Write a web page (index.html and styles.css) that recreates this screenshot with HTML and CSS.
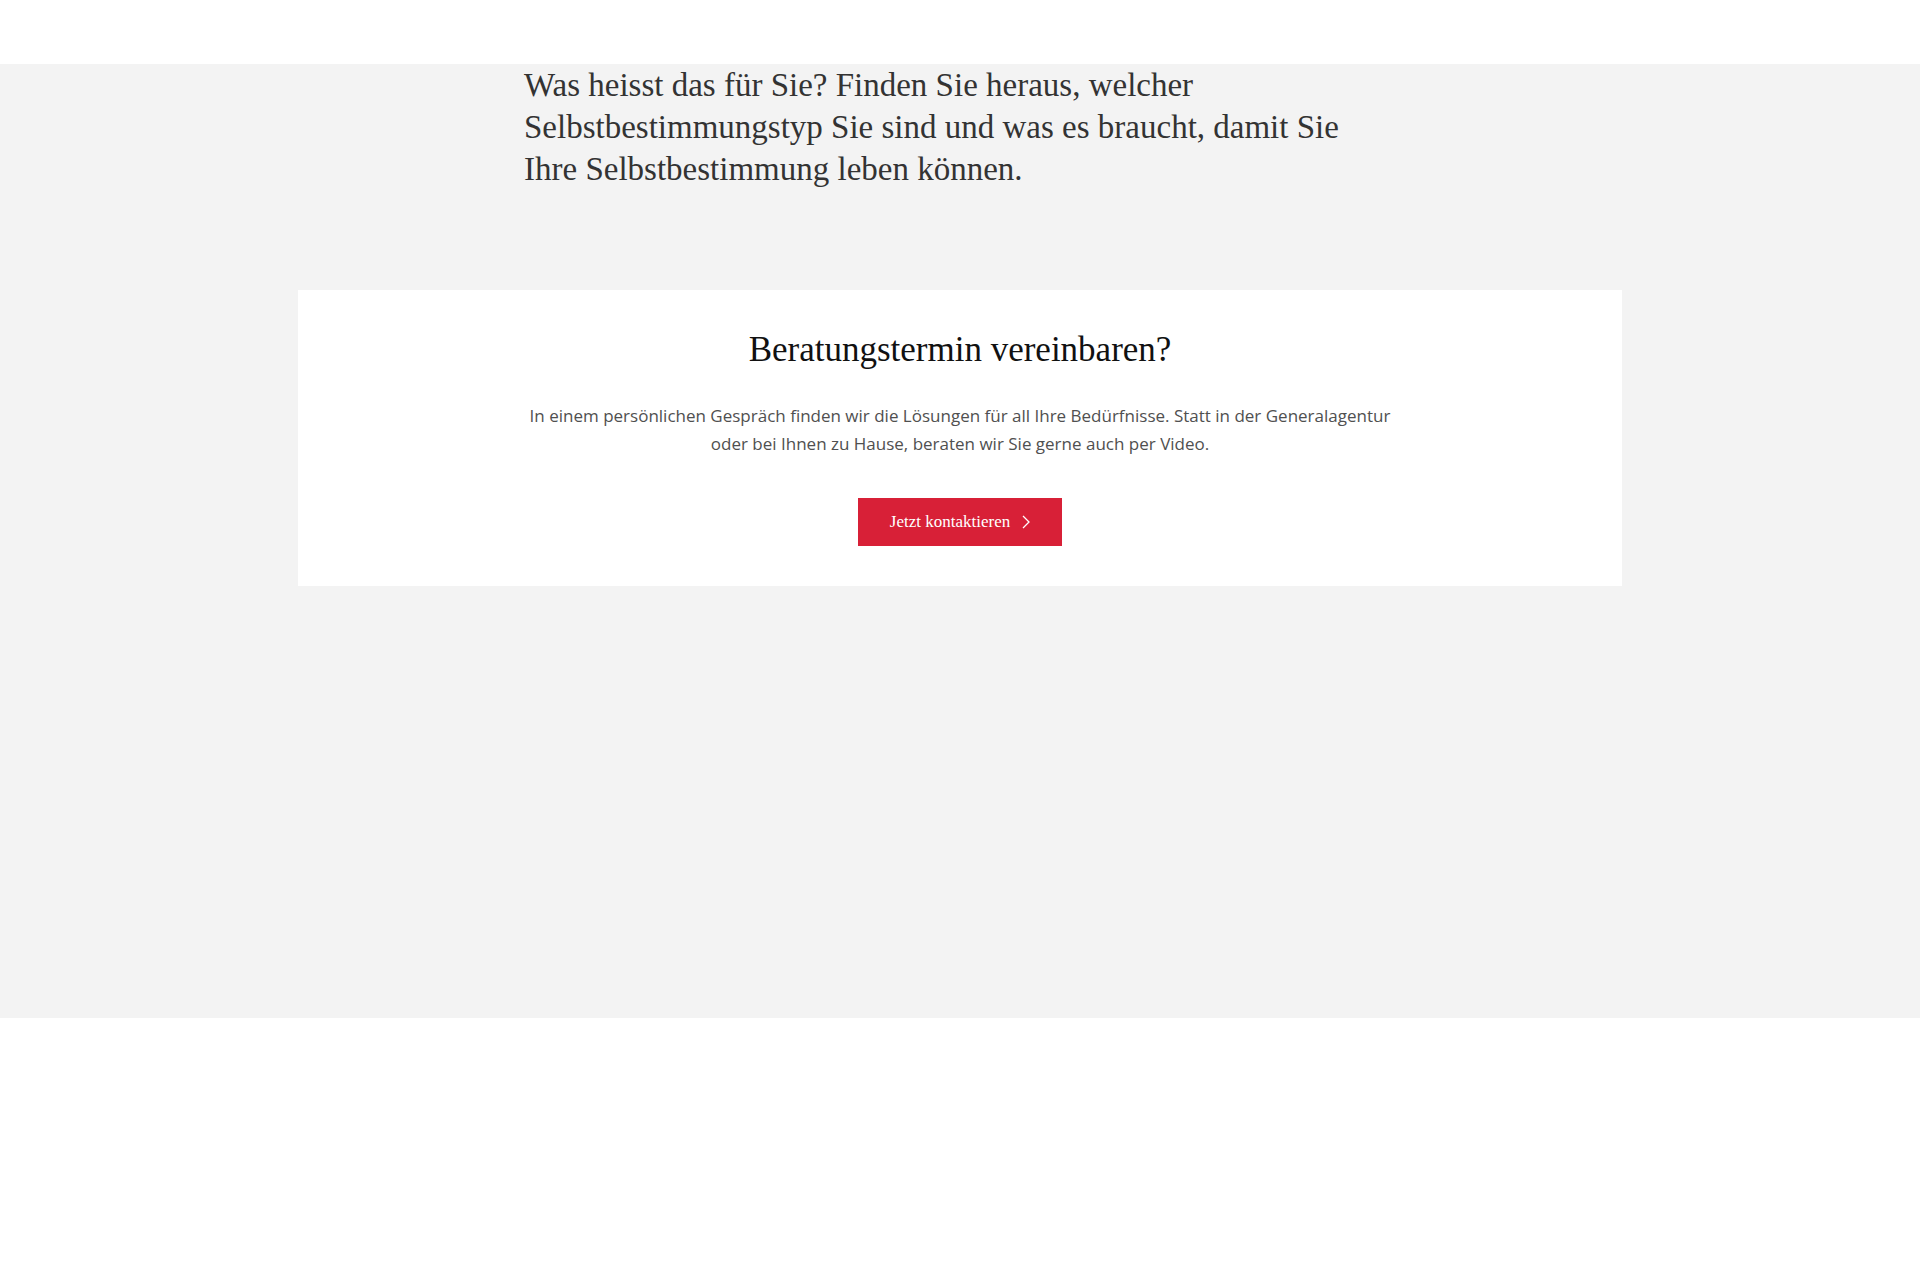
FILE: index.html
```html
<!DOCTYPE html>
<html lang="de">
<head>
<meta charset="utf-8">
<title>Beratungstermin vereinbaren</title>
<link rel="stylesheet" href="styles.css">
</head>
<body>
<header class="topbar"></header>
<main class="band">
  <div class="intro">
    <p class="intro-text">Was heisst das für Sie? Finden Sie heraus, welcher Selbstbestimmungstyp Sie sind und was es braucht, damit Sie Ihre Selbstbestimmung leben können.</p>
  </div>
  <section class="card">
    <h2 class="card-title">Beratungstermin vereinbaren?</h2>
    <p class="card-text">In einem persönlichen Gespräch finden wir die Lösungen für all Ihre Bedürfnisse. Statt in der Generalagentur oder bei Ihnen zu Hause, beraten wir Sie gerne auch per Video.</p>
    <a class="btn" href="#">Jetzt kontaktieren
      <svg class="chev" width="8" height="14" viewBox="0 0 8 14" aria-hidden="true"><path d="M1 1l6 6-6 6" fill="none" stroke="#fff" stroke-width="1.3"/></svg>
    </a>
  </section>
</main>
<footer class="footer"></footer>
</body>
</html>
```
FILE: styles.css
```css
html, body {
  margin: 0;
  padding: 0;
  background: #ffffff;
}
.topbar {
  height: 64px;
  background: #ffffff;
}
.band {
  background: #f3f3f3;
  height: 954px;
  display: flex;
  flex-direction: column;
  align-items: center;
}
.intro {
  width: 862px;
  padding-right: 10px;
}
.intro-text {
  margin: 0;
  font-family: "Liberation Serif", "Times New Roman", serif;
  font-size: 33px;
  line-height: 42px;
  color: #333333;
}
.card {
  margin-top: 100px;
  width: 1324px;
  box-sizing: border-box;
  background: #ffffff;
  padding: 40px 0 40px;
  display: flex;
  flex-direction: column;
  align-items: center;
}
.card-title {
  margin: 0;
  font-family: "Liberation Serif", "Times New Roman", serif;
  font-weight: normal;
  font-size: 35px;
  line-height: 40px;
  color: #111111;
}
.card-text {
  margin: 32px 0 0;
  width: 875px;
  text-align: center;
  font-family: "Open Sans", "Noto Sans", sans-serif;
  font-size: 17px;
  line-height: 28px;
  color: #505050;
}
.btn {
  margin-top: 40px;
  width: 204px;
  height: 48px;
  box-sizing: border-box;
  background: #d82037;
  color: #ffffff;
  text-decoration: none;
  display: flex;
  align-items: center;
  justify-content: center;
  gap: 12px;
  font-family: "Liberation Serif", "Times New Roman", serif;
  font-size: 17px;
}
.chev {
  display: block;
}
.footer {
  height: 262px;
  background: #ffffff;
}
```
